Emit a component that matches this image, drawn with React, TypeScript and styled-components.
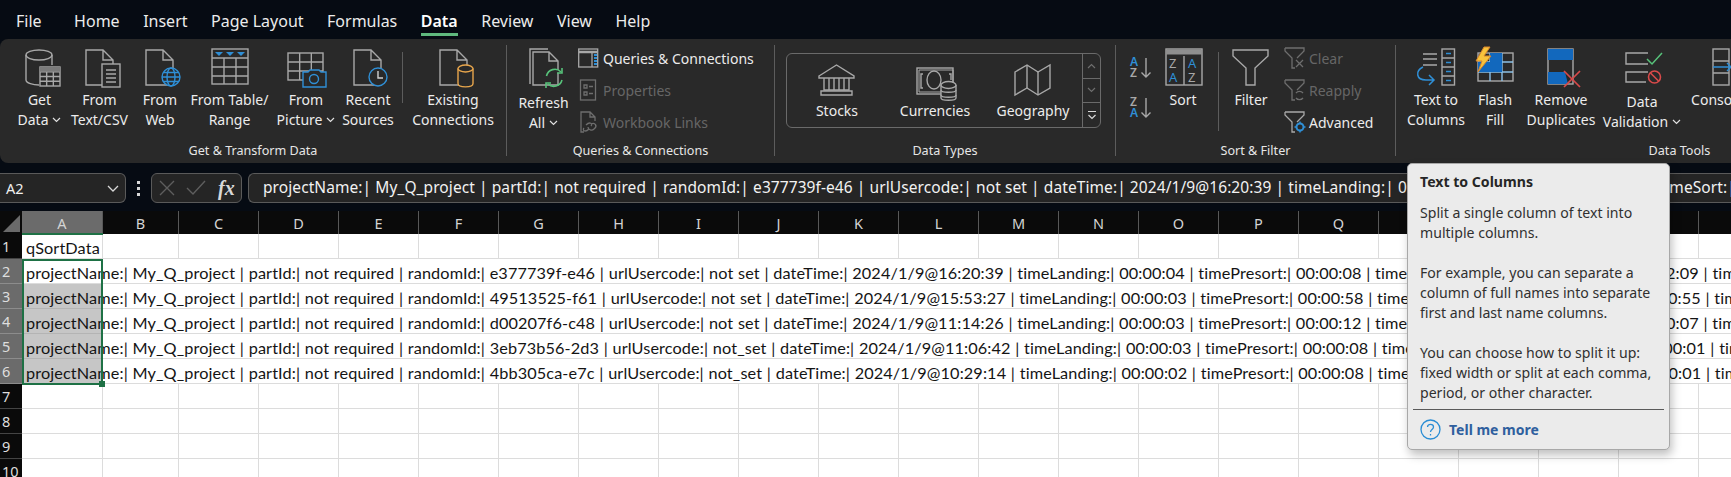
import React from "react";
import styled, { createGlobalStyle } from "styled-components";

const G = "#a8a8a8";
const BL = "#2f8fd6";
const UI = `"Noto Sans", "Open Sans", sans-serif`;

const Global = createGlobalStyle`
  html, body { margin: 0; padding: 0; background: #060b13; overflow: hidden; }
  * { box-sizing: border-box; }
`;

const Page = styled.div`
  position: relative;
  width: 1731px;
  height: 477px;
  overflow: hidden;
  background: #060b13;
  font-family: ${UI};
  color: #f0f0f0;
`;

const TabBar = styled.div`
  display: flex;
  gap: 23.5px;
  height: 39px;
  padding-left: 16px;
`;

const Tab = styled.div<{ $active?: boolean; $first?: boolean }>`
  position: relative;
  height: 36px;
  line-height: 42px;
  font-size: 16px;
  font-weight: ${(p) => (p.$active ? 600 : 400)};
  color: ${(p) => (p.$active ? "#ffffff" : "#ececec")};
  margin-right: ${(p) => (p.$first ? "9px" : "0")};
  border-bottom: ${(p) => (p.$active ? "3px solid #5fb97e" : "3px solid transparent")};
`;

const Ribbon = styled.div`
  display: flex;
  height: 124px;
  padding-top: 6px;
  background: #292929;
  border-radius: 8px 0 0 8px;
  overflow: hidden;
`;

const Group = styled.div<{ $w: number; $pad?: number }>`
  flex: none;
  display: flex;
  flex-direction: column;
  width: ${(p) => p.$w}px;
  height: 111px;
  border-right: 1px solid #5c5c5c;
`;

const GroupBody = styled.div<{ $pad: number }>`
  flex: 1;
  display: flex;
  align-items: flex-start;
  padding-left: ${(p) => p.$pad}px;
`;

const GroupLabel = styled.div`
  height: 20px;
  margin: 5px 0 -5px;
  line-height: 20px;
  text-align: center;
  font-size: 12.6px;
  color: #e6e6e6;
`;

const LargeButton = styled.div<{ $w: number }>`
  flex: none;
  width: ${(p) => p.$w}px;
  padding-top: 1px;
  display: flex;
  flex-direction: column;
  align-items: center;
  font-size: 14px;
  line-height: 20px;
  color: #ececec;
  white-space: nowrap;
  svg.ico { display: block; }
`;

const Chevron = styled.svg`
  width: 9px;
  height: 6px;
  margin-left: 4px;
  vertical-align: 2px;
`;

const VSep = styled.div<{ $h: number; $top: number; $l: number; $r: number }>`
  flex: none;
  width: 1px;
  height: ${(p) => p.$h}px;
  margin: ${(p) => p.$top}px ${(p) => p.$r}px 0 ${(p) => p.$l}px;
  background: #5c5c5c;
`;

const SmallStack = styled.div<{ $ml: number }>`
  flex: none;
  display: flex;
  flex-direction: column;
  gap: 8px;
  padding-top: 1px;
  margin-left: ${(p) => p.$ml}px;
`;

const SmallButton = styled.div<{ $off?: boolean }>`
  display: flex;
  align-items: center;
  height: 24px;
  font-size: 14px;
  white-space: nowrap;
  color: ${(p) => (p.$off ? "#666666" : "#ececec")};
  svg { flex: none; margin-right: 3px; }
`;

const SortStack = styled.div`
  flex: none;
  display: flex;
  flex-direction: column;
  gap: 4px;
  padding-top: 7px;
  width: 28px;
`;

const Gallery = styled.div`
  flex: none;
  display: flex;
  width: 315px;
  height: 75px;
  margin: 8px 0 0 11px;
  border: 1px solid #6a6a6a;
  border-radius: 6px;
`;

const GalleryItems = styled.div`
  flex: 1;
  display: flex;
  padding-left: 1px;
`;

const GalleryItem = styled.div`
  width: 98px;
  display: flex;
  flex-direction: column;
  align-items: center;
  font-size: 14px;
  line-height: 20px;
  color: #ececec;
`;

const GalleryScroll = styled.div`
  flex: none;
  width: 18px;
  display: flex;
  flex-direction: column;
  border-left: 1px solid #6a6a6a;
`;

const ScrollCell = styled.div<{ $last?: boolean }>`
  flex: ${(p) => (p.$last ? "none" : "1")};
  height: ${(p) => (p.$last ? "24px" : "auto")};
  display: flex;
  align-items: center;
  justify-content: center;
  border-bottom: ${(p) => (p.$last ? "0" : "1px solid #6a6a6a")};
`;

const FormulaBar = styled.div`
  display: flex;
  align-items: stretch;
  height: 30px;
  margin-top: 10px;
`;

const NameBox = styled.div`
  flex: none;
  width: 126px;
  display: flex;
  align-items: center;
  justify-content: space-between;
  padding: 0 6px;
  background: #252525;
  border: 1px solid #5a5a5a;
  border-left: 0;
  border-radius: 0 6px 6px 0;
  font-size: 14.5px;
`;

const Dots = styled.div`
  flex: none;
  width: 25px;
  display: flex;
  flex-direction: column;
  align-items: center;
  justify-content: center;
  gap: 3px;
  i { width: 3px; height: 3px; background: #d8d8d8; display: block; }
`;

const FxBox = styled.div`
  flex: none;
  width: 91px;
  display: flex;
  align-items: center;
  padding-left: 7px;
  gap: 11px;
  background: #252525;
  border: 1px solid #5a5a5a;
  border-radius: 6px;
`;

const FxText = styled.span`
  font-family: "Liberation Serif", serif;
  font-style: italic;
  font-weight: 700;
  font-size: 20px;
  color: #d8d8d8;
  margin-left: 1px;
`;

const FormulaInput = styled.div`
  flex: 1;
  margin-left: 6px;
  padding-left: 14px;
  background: #252525;
  border: 1px solid #5a5a5a;
  border-right: 0;
  border-radius: 6px 0 0 6px;
  font-size: 15.5px;
  letter-spacing: 0.08px;
  line-height: 27px;
  white-space: nowrap;
  overflow: hidden;
  color: #f2f2f2;
`;

const Sheet = styled.div`
  position: relative;
  margin-top: 8px;
  width: 1731px;
`;

const HeadRow = styled.div`
  display: flex;
  height: 23px;
`;

const Corner = styled.div`
  flex: none;
  width: 22px;
  background: #0a0a0a;
  display: flex;
  align-items: flex-end;
  justify-content: flex-end;
  padding: 0 2px 2px 0;
`;

const ColHead = styled.div<{ $w: number; $sel?: boolean }>`
  flex: none;
  width: ${(p) => p.$w}px;
  height: 23px;
  line-height: 25px;
  text-align: center;
  font-size: 14.5px;
  color: #d4d4d4;
  background: ${(p) => (p.$sel ? "#6b6b6b" : "#0a0a0a")};
  border-right: 1px solid #585858;
`;

const GridRow = styled.div`
  display: flex;
  height: 25px;
  background: #fff;
`;

const RowHead = styled.div<{ $sel?: boolean }>`
  flex: none;
  width: 22px;
  padding-left: 2px;
  line-height: 25px;
  font-size: 14.5px;
  overflow: hidden;
  color: #dedede;
  background: ${(p) => (p.$sel ? "#6b6b6b" : "#0a0a0a")};
  border-bottom: 1px solid ${(p) => (p.$sel ? "#8c8c8c" : "#444444")};
`;

const Cell = styled.div<{ $w: number; $lined?: boolean }>`
  flex: none;
  width: ${(p) => p.$w}px;
  height: 25px;
  border-bottom: 1px solid #dcdcdc;
  border-right: ${(p) => (p.$lined ? "1px solid #dcdcdc" : "0")};
`;

const FilledCell = styled.div<{ $sel?: boolean }>`
  flex: none;
  width: 81px;
  height: 25px;
  padding-left: 4px;
  border-bottom: 1px solid ${(p) => (p.$sel ? "#b4b4b4" : "#dcdcdc")};
  background: ${(p) => (p.$sel ? "linear-gradient(to right, #fff 2px, #c6c6c6 2px, #c6c6c6 79px, #fff 79px)" : "#fff")};
`;

const CellText = styled.div`
  width: 0;
  font-family: "Lato", "Noto Sans", sans-serif;
  font-size: 16.25px;
  letter-spacing: 0.12px;
  word-spacing: 0.4px;
  line-height: 27px;
  white-space: nowrap;
  color: #141414;
`;

const LabelCell = styled(Cell)`
  padding-left: 4px;
`;

const RowFill = styled.div`
  flex: 1;
  height: 25px;
  border-bottom: 1px solid #dcdcdc;
`;

const Selection = styled.div`
  position: absolute;
  left: 22px;
  top: 48px;
  width: 81px;
  height: 126px;
  border: 2px solid #1e7145;
  pointer-events: none;
`;

const SelTop = styled.div`
  position: absolute;
  left: 22px;
  top: 22px;
  width: 81px;
  height: 2px;
  background: #1e7145;
`;

const Handle = styled.div`
  position: absolute;
  right: -4px;
  bottom: -4px;
  width: 6px;
  height: 6px;
  background: #1e7145;
`;

const Tooltip = styled.div`
  position: absolute;
  left: 1407px;
  top: 163px;
  width: 263px;
  height: 287px;
  padding: 8px 5px 0;
  background: #ebebeb;
  border: 1px solid #a8a8a8;
  border-radius: 5px;
  box-shadow: 2px 5px 10px rgba(0, 0, 0, 0.25);
  color: #303030;
  font-size: 14.1px;
  line-height: 20px;
`;

const TipTitle = styled.div`
  font-weight: 700;
  padding-left: 7px;
  margin-bottom: 11px;
  color: #262626;
`;

const TipPara = styled.p`
  margin: 0 0 20px;
  padding-left: 7px;
  &:last-of-type { margin-bottom: 6px; }
`;

const TipFoot = styled.div`
  display: flex;
  align-items: center;
  gap: 8px;
  height: 40px;
  padding-left: 7px;
  border-top: 1px solid #5a5a5a;
  font-weight: 700;
  font-size: 14px;
  color: #2f5f9e;
`;

const Ico: React.FC<{ w: number; h?: number; children: React.ReactNode }> = ({ w, h = 44, children }) => (
  <svg className="ico" width={w} height={h} viewBox={`0 0 ${w} ${h}`} fill="none" stroke={G} strokeWidth={1.4}>
    {children}
  </svg>
);

const Doc = ({ x, y, w, h, f = 10, c = G }: { x: number; y: number; w: number; h: number; f?: number; c?: string }) => (
  <path
    d={`M${x} ${y}H${x + w - f}L${x + w} ${y + f}V${y + h}H${x}ZM${x + w - f} ${y}V${y + f}H${x + w}`}
    stroke={c}
    fill="#292929"
  />
);

const Down = () => (
  <Chevron viewBox="0 0 9 6" fill="none" stroke="#e0e0e0" strokeWidth={1.2}>
    <path d="M1 1l3.500 3.500L8 1" />
  </Chevron>
);

const MiniGrid = ({ x, y, w, h, cols, rows, c = G, head }: { x: number; y: number; w: number; h: number; cols: number; rows: number; c?: string; head?: boolean }) => {
  const parts: string[] = [];
  for (let i = 1; i < cols; i++) parts.push(`M${x + (w * i) / cols} ${y}V${y + h}`);
  for (let i = 1; i < rows; i++) parts.push(`M${x} ${y + (h * i) / rows}H${x + w}`);
  return (
    <g stroke={c}>
      <rect x={x} y={y} width={w} height={h} fill="#292929" />
      <path d={parts.join("")} />
      {head && <rect x={x} y={y} width={w} height={h / rows} fill="#7a7a7a" stroke="none" />}
    </g>
  );
};

const Cyl = ({ x, y, w, h, c }: { x: number; y: number; w: number; h: number; c: string }) => (
  <g stroke={c}>
    <path d={`M${x} ${y + 3.500}V${y + h - 3.500}C${x} ${y + h + 1} ${x + w} ${y + h + 1} ${x + w} ${y + h - 3.500}V${y + 3.500}`} fill="#292929" />
    <ellipse cx={x + w / 2} cy={y + 3.500} rx={w / 2} ry={3.500} fill="#292929" />
  </g>
);

const GetDataIcon = () => (
  <Ico w={51}>
    <path d="M12 9V34C12 37 19 39 25 39" />
    <path d="M38 9V19" />
    <ellipse cx={25} cy={9} rx={13} ry={5} />
    <MiniGrid x={26} y={21} w={20} h={19} cols={3} rows={4} head />
  </Ico>
);

const TextCsvIcon = () => (
  <Ico w={69}>
    <Doc x={21} y={4} w={27} h={35} f={10} />
    <rect x={37} y={18} width={18} height={23} fill="#292929" />
    <path d="M41 24H51M41 28H51M41 32H51M41 36H51" />
  </Ico>
);

const WebIcon = () => (
  <Ico w={52}>
    <Doc x={12} y={4} w={27} h={35} f={10} />
    <g stroke={BL}>
      <circle cx={37} cy={31} r={9} fill="#292929" />
      <ellipse cx={37} cy={31} rx={4} ry={9} />
      <path d="M28 31H46M29.500 26.500H44.500M29.500 35.500H44.500" />
    </g>
  </Ico>
);

const TableIcon = () => (
  <Ico w={87}>
    <rect x={26} y={3} width={36} height={35} />
    <path d="M26 12H62M26 21H62M26 30H62M38 12V38M50 12V38" />
    <path d="M29 6H37L33 10ZM40 6H48L44 10ZM51 6H59L55 10Z" fill={BL} stroke="none" />
  </Ico>
);

const PictureIcon = () => (
  <Ico w={66}>
    <MiniGrid x={15} y={7} w={35} h={27} cols={3} rows={3} />
    <path d="M30 26H35L37 24H46L48 26H53V41H30Z" stroke={BL} fill="#292929" />
    <circle cx={41} cy={33} r={4.500} stroke={BL} />
  </Ico>
);

const RecentIcon = () => (
  <Ico w={58}>
    <Doc x={15} y={4} w={27} h={35} f={10} />
    <circle cx={39} cy={31} r={9} stroke={BL} fill="#292929" />
    <path d="M39 25V32H44" stroke="#d0d0d0" />
  </Ico>
);

const ExistingIcon = () => (
  <Ico w={90}>
    <Doc x={32} y={4} w={27} h={35} f={10} />
    <Cyl x={50} y={19} w={15} h={22} c="#e8a64c" />
  </Ico>
);

const RefreshIcon = () => (
  <Ico w={57} h={47}>
    <path d="M15 38V3H33" />
    <Doc x={18} y={6} w={25} h={33} f={9} />
    <g stroke="#57c27a" strokeWidth={1.6}>
      <path d="M31.500 30A8.500 8.500 0 0 1 46 26" fill="#292929" />
      <path d="M47 34A8.500 8.500 0 0 1 33 38" />
      <path d="M47 22V27H42M31 42V37H36" />
    </g>
  </Ico>
);

const Sm: React.FC<{ children: React.ReactNode; off?: boolean }> = ({ children, off }) => (
  <svg width={22} height={24} viewBox="0 0 22 24" fill="none" stroke={off ? "#6e6e6e" : G} strokeWidth={1.3}>
    {children}
  </svg>
);

const QueriesIcon = () => (
  <Sm>
    <rect x={0.7} y={3} width={19} height={18} />
    <path d="M1 6H20" strokeWidth={2.500} />
    <path d="M14 6V21" />
    <path d="M16 9H19M16 12H19M16 15H19M16 18H19" stroke={BL} strokeWidth={2} />
  </Sm>
);

const PropsIcon = () => (
  <Sm off>
    <rect x={2.500} y={2} width={15} height={20} />
    <path d="M6 7H9V10H6ZM6 14H9V17H6ZM11 8.500H15M11 15.500H15" />
  </Sm>
);

const LinksIcon = () => (
  <Sm off>
    <path d="M3 17V2H12L17 7V11M12 2V7H17" />
    <path d="M8 15C12 11 15 14 13 16M11 19C7 23 4 20 6 18M6 22H3V17M13 14C17 12 20 16 16 19C14 21 10 20 10 17" />
  </Sm>
);

const StocksIcon = () => (
  <Ico w={98} h={47}>
    <path d="M31 22L48.500 11L66 22V24H31Z" />
    <path d="M36 24V36H61V24M41 24V36M46 24V36M51 24V36M56 24V36" />
    <path d="M33 37H64V41H33Z" />
  </Ico>
);

const CurrencyIcon = () => (
  <Ico w={98} h={47}>
    <rect x={31} y={14} width={36} height={26} />
    <path d="M33 16H67V38H33Z" strokeWidth={1} />
    <ellipse cx={48} cy={26} rx={7} ry={9} />
    <path d="M37 20H35V34H37M63 20H65V26" />
    <g fill="#292929">
      <path d="M55 31V44C55 47 70 47 70 44V31" />
      <ellipse cx={62.500} cy={31} rx={7.500} ry={3.500} />
      <path d="M55 36C55 39 70 39 70 36M55 41C55 44 70 44 70 41" />
    </g>
  </Ico>
);

const GeoIcon = () => (
  <Ico w={98} h={47}>
    <path d="M31 18L43 11L54 18L66 11V34L54 41L43 34L31 41Z" />
    <path d="M43 11V34M54 18V41" />
  </Ico>
);

const SortAZ = ({ down }: { down?: boolean }) => (
  <svg width={28} height={36} viewBox="0 0 28 36" fill="none" strokeWidth={1.4} stroke={G}>
    <text x={2} y={14} fontFamily="Noto Sans, sans-serif" fontSize={12} fill={down ? G : BL} stroke="none" fontWeight={600}>
      {down ? "Z" : "A"}
    </text>
    <text x={2} y={25} fontFamily="Noto Sans, sans-serif" fontSize={12} fill={down ? BL : G} stroke="none" fontWeight={600}>
      {down ? "A" : "Z"}
    </text>
    <path d="M18 6V25M13.500 20.500L18 25L22.500 20.500" />
  </svg>
);

const SortIcon = () => (
  <Ico w={54}>
    <rect x={10} y={3} width={36} height={36} />
    <path d="M10 6H46" strokeWidth={5} stroke="#8f8f8f" />
    <path d="M28 10V39" />
    <text x={13} y={22} fontFamily="Noto Sans, sans-serif" fontSize={13} fill={G} stroke="none">Z</text>
    <text x={13} y={36} fontFamily="Noto Sans, sans-serif" fontSize={13} fill={BL} stroke="none">A</text>
    <text x={32} y={22} fontFamily="Noto Sans, sans-serif" fontSize={13} fill={BL} stroke="none">A</text>
    <text x={32} y={36} fontFamily="Noto Sans, sans-serif" fontSize={13} fill={G} stroke="none">Z</text>
  </Ico>
);

const FilterIcon = () => (
  <Ico w={54}>
    <path d="M9 4H44V10L31 22V39H22V22L9 10Z" />
  </Ico>
);

const FunnelSm: React.FC<{ off?: boolean; children?: React.ReactNode }> = ({ off, children }) => (
  <svg width={22} height={24} viewBox="0 0 22 24" fill="none" stroke={off ? "#6e6e6e" : G} strokeWidth={1.3}>
    <path d="M1 2H20V5L13 12M1 2V5L8 12V22H11" />
    {children}
  </svg>
);

const TextColIcon = () => (
  <Ico w={60}>
    <path d="M17 8H31M17 13H31M17 19H31" />
    <rect x={36} y={3} width={12.500} height={36} />
    <path d="M36 12H48.500M36 21H48.500M36 30H48.500" />
    <path d="M40 7.500H45M40 16.500H45M40 25.500H45M40 34.500H45" stroke={BL} strokeWidth={1.6} />
    <path d="M17 21C9 25 10 34 20 34H27M23 29L28 34L23 39" stroke={BL} strokeWidth={1.5} />
  </Ico>
);

const FlashIcon = () => (
  <Ico w={58}>
    <rect x={12} y={7} width={35} height={28} />
    <path d="M12 16H47M12 26H47M24 7V35M36 7V35" stroke="#8cc1e8" />
    <rect x={24} y={7} width={12} height={9} fill="#1268bd" stroke="none" />
    <rect x={24} y={16} width={12} height={10} fill="#1268bd" stroke="none" />
    <rect x={12} y={16} width={12} height={10} fill="#1268bd" stroke="none" />
    <path d="M18 1L10 15H16L12 26L25 10H18L24 1Z" fill="#f8c33c" stroke="#d8862a" strokeWidth={1} />
  </Ico>
);

const RemoveIcon = () => (
  <Ico w={74}>
    <rect x={24} y={3} width={25} height={35} />
    <rect x={24} y={3} width={25} height={11} fill="#1268bd" stroke="none" />
    <path d="M24 26H41L44 38H24Z" fill="#1268bd" stroke="none" />
    <path d="M40 25L56 41M56 25L40 41" stroke="#d94a4a" strokeWidth={1.700} />
  </Ico>
);

const ValidationIcon = () => (
  <Ico w={88} h={46}>
    <path d="M50 7H28V18H50" />
    <path d="M50 26H28V36H48" />
    <path d="M49 13L54 18L64 7" stroke="#57c27a" strokeWidth={1.500} />
    <circle cx={56.500} cy={31} r={6} stroke="#d94a4a" strokeWidth={1.600} />
    <path d="M52.500 27L60.500 35" stroke="#d94a4a" strokeWidth={1.600} />
  </Ico>
);

const ConsolidateIcon = () => (
  <Ico w={88}>
    <rect x={27} y={3} width={16} height={36} />
    <path d="M27 15H43M27 27H43" />
    <path d="M27 21H45M41 17L45 21L41 25" stroke={BL} />
  </Ico>
);

const COLS = ["A", "B", "C", "D", "E", "F", "G", "H", "I", "J", "K", "L", "M", "N", "O", "P", "Q", "R", "S", "T", "U", "V", "W"];
const widthOf = (i: number) => (i === 0 ? 81 : i === 1 ? 76 : 80);

const tail = (sort: string, tot: string) => `timeSort:| ${sort} | timeSurvey1:| ${tot} | timeTotal:| 00:03:40`;
const ROWS = [
  { id: "e377739f-e46", url: "not set", dt: "2024/1/9@16:20:39", a: "00:00:04", b: "00:00:08", c: tail("00:01:44", "00:02:09") },
  { id: "49513525-f61", url: "not set", dt: "2024/1/9@15:53:27", a: "00:00:03", b: "00:00:58", c: tail("00:01:12", "00:00:55") },
  { id: "d00207f6-c48", url: "not set", dt: "2024/1/9@11:14:26", a: "00:00:03", b: "00:00:12", c: tail("00:01:30", "00:00:07") },
  { id: "3eb73b56-2d3", url: "not_set", dt: "2024/1/9@11:06:42", a: "00:00:03", b: "00:00:08", c: tail("00:00:40", "00:00:01") },
  { id: "4bb305ca-e7c", url: "not_set", dt: "2024/1/9@10:29:14", a: "00:00:02", b: "00:00:08", c: tail("00:00:36", "00:00:01") },
];
const rowText = (r: (typeof ROWS)[number]) =>
  `projectName:| My_Q_project | partId:| not required | randomId:| ${r.id} | urlUsercode:| ${r.url} | dateTime:| ${r.dt} | timeLanding:| ${r.a} | timePresort:| ${r.b} | ${r.c}`;

const EmptyRow: React.FC<{ n: number; label?: string }> = ({ n, label }) => (
  <GridRow>
    <RowHead>{n}</RowHead>
    {COLS.map((c, i) =>
      i === 0 && label ? (
        <LabelCell key={c} $w={widthOf(i)} $lined>
          <CellText>{label}</CellText>
        </LabelCell>
      ) : (
        <Cell key={c} $w={widthOf(i)} $lined />
      )
    )}
  </GridRow>
);

export default function App() {
  return (
    <Page>
      <Global />
      <TabBar>
        <Tab $first>File</Tab>
        <Tab>Home</Tab>
        <Tab>Insert</Tab>
        <Tab>Page Layout</Tab>
        <Tab>Formulas</Tab>
        <Tab $active>Data</Tab>
        <Tab>Review</Tab>
        <Tab>View</Tab>
        <Tab>Help</Tab>
      </TabBar>

      <Ribbon>
        <Group $w={507}>
          <GroupBody $pad={14}>
            <LargeButton $w={51}><GetDataIcon />Get<span>Data<Down /></span></LargeButton>
            <LargeButton $w={69}><TextCsvIcon />From<span>Text/CSV</span></LargeButton>
            <LargeButton $w={52}><WebIcon />From<span>Web</span></LargeButton>
            <LargeButton $w={87}><TableIcon />From Table/<span>Range</span></LargeButton>
            <LargeButton $w={66}><PictureIcon />From<span>Picture<Down /></span></LargeButton>
            <LargeButton $w={58}><RecentIcon />Recent<span>Sources</span></LargeButton>
            <VSep $h={51} $top={7} $l={5} $r={5} />
            <LargeButton $w={90}><ExistingIcon />Existing<span>Connections</span></LargeButton>
          </GroupBody>
          <GroupLabel>Get &amp; Transform Data</GroupLabel>
        </Group>

        <Group $w={268}>
          <GroupBody $pad={8}>
            <LargeButton $w={57}><RefreshIcon />Refresh<span>All<Down /></span></LargeButton>
            <SmallStack $ml={6}>
              <SmallButton><QueriesIcon />Queries &amp; Connections</SmallButton>
              <SmallButton $off><PropsIcon />Properties</SmallButton>
              <SmallButton $off><LinksIcon />Workbook Links</SmallButton>
            </SmallStack>
          </GroupBody>
          <GroupLabel>Queries &amp; Connections</GroupLabel>
        </Group>

        <Group $w={341}>
          <GroupBody $pad={0}>
            <Gallery>
              <GalleryItems>
                <GalleryItem><StocksIcon />Stocks</GalleryItem>
                <GalleryItem><CurrencyIcon />Currencies</GalleryItem>
                <GalleryItem><GeoIcon />Geography</GalleryItem>
              </GalleryItems>
              <GalleryScroll>
                <ScrollCell>
                  <svg width={9} height={6} viewBox="0 0 9 6" fill="none" stroke="#6e6e6e" strokeWidth={1.2}><path d="M1 5l3.500-3.500L8 5" /></svg>
                </ScrollCell>
                <ScrollCell>
                  <svg width={9} height={6} viewBox="0 0 9 6" fill="none" stroke="#6e6e6e" strokeWidth={1.2}><path d="M1 1l3.500 3.500L8 1" /></svg>
                </ScrollCell>
                <ScrollCell $last>
                  <svg width={10} height={10} viewBox="0 0 10 10" fill="none" stroke="#d8d8d8" strokeWidth={1.2}><path d="M1 1.500H9M1.500 5l3.500 3.500L8.500 5" /></svg>
                </ScrollCell>
              </GalleryScroll>
            </Gallery>
          </GroupBody>
          <GroupLabel>Data Types</GroupLabel>
        </Group>

        <Group $w={280}>
          <GroupBody $pad={12}>
            <SortStack><SortAZ /><SortAZ down /></SortStack>
            <LargeButton $w={54}><SortIcon />Sort</LargeButton>
            <VSep $h={79} $top={7} $l={8} $r={5} />
            <LargeButton $w={54}><FilterIcon />Filter</LargeButton>
            <SmallStack $ml={6}>
              <SmallButton $off><FunnelSm off><path d="M12 14L19 21M19 14L12 21" /></FunnelSm>Clear</SmallButton>
              <SmallButton $off><FunnelSm off><path d="M12 15A4.500 4.500 0 0 1 19 15M19 20A4.500 4.500 0 0 1 12 20" /></FunnelSm>Reapply</SmallButton>
              <SmallButton><FunnelSm><circle cx={16} cy={17} r={3.500} stroke={BL} strokeWidth={2} /><path d="M16 11.500V13M16 21V22.500M10.500 17H12M20 17H21.500" stroke={BL} strokeWidth={1.500} /></FunnelSm>Advanced</SmallButton>
            </SmallStack>
          </GroupBody>
          <GroupLabel>Sort &amp; Filter</GroupLabel>
        </Group>

        <Group $w={568}>
          <GroupBody $pad={10}>
            <LargeButton $w={60}><TextColIcon />Text to<span>Columns</span></LargeButton>
            <LargeButton $w={58}><FlashIcon />Flash<span>Fill</span></LargeButton>
            <LargeButton $w={74}><RemoveIcon />Remove<span>Duplicates</span></LargeButton>
            <LargeButton $w={88}><ValidationIcon />Data<span>Validation<Down /></span></LargeButton>
            <LargeButton $w={88}><ConsolidateIcon />Consolidate</LargeButton>
          </GroupBody>
          <GroupLabel>Data Tools</GroupLabel>
        </Group>
      </Ribbon>

      <FormulaBar>
        <NameBox>
          A2
          <svg width={12} height={7} viewBox="0 0 12 7" fill="none" stroke="#d8d8d8" strokeWidth={1.3}><path d="M1 1l5 5 5-5" /></svg>
        </NameBox>
        <Dots><i /><i /><i /></Dots>
        <FxBox>
          <svg width={16} height={16} viewBox="0 0 16 16" fill="none" stroke="#5e5e5e" strokeWidth={1.4}><path d="M1 1L15 15M15 1L1 15" /></svg>
          <svg width={20} height={16} viewBox="0 0 20 16" fill="none" stroke="#5e5e5e" strokeWidth={1.4}><path d="M1 8L7 14L19 1" /></svg>
          <FxText>fx</FxText>
        </FxBox>
        <FormulaInput>{rowText(ROWS[0])}</FormulaInput>
      </FormulaBar>

      <Sheet>
        <HeadRow>
          <Corner>
            <svg width={17} height={17} viewBox="0 0 17 17"><path d="M17 0V17H0Z" fill="#6a6a6a" /></svg>
          </Corner>
          {COLS.map((c, i) => (
            <ColHead key={c} $w={widthOf(i)} $sel={i === 0}>{c}</ColHead>
          ))}
        </HeadRow>
        <EmptyRow n={1} label="qSortData" />
        {ROWS.map((r, i) => (
          <GridRow key={r.id}>
            <RowHead $sel>{i + 2}</RowHead>
            <FilledCell $sel={i > 0}>
              <CellText>{rowText(r)}</CellText>
            </FilledCell>
            <RowFill />
          </GridRow>
        ))}
        {[7, 8, 9, 10].map((n) => (
          <EmptyRow key={n} n={n} />
        ))}
        <SelTop />
        <Selection><Handle /></Selection>
      </Sheet>

      <Tooltip>
        <TipTitle>Text to Columns</TipTitle>
        <TipPara>Split a single column of text into<br />multiple columns.</TipPara>
        <TipPara>For example, you can separate a<br />column of full names into separate<br />first and last name columns.</TipPara>
        <TipPara>You can choose how to split it up:<br />fixed width or split at each comma,<br />period, or other character.</TipPara>
        <TipFoot>
          <svg width={21} height={21} viewBox="0 0 21 21" fill="none" stroke="#2a8dd4" strokeWidth={1.3}>
            <circle cx={10.500} cy={10.500} r={9.500} />
            <path d="M7.500 8C7.500 4.500 13.500 4.500 13.500 8C13.500 10.500 10.500 10.500 10.500 13" />
            <path d="M10.500 15V16.500" />
          </svg>
          Tell me more
        </TipFoot>
      </Tooltip>
    </Page>
  );
}
